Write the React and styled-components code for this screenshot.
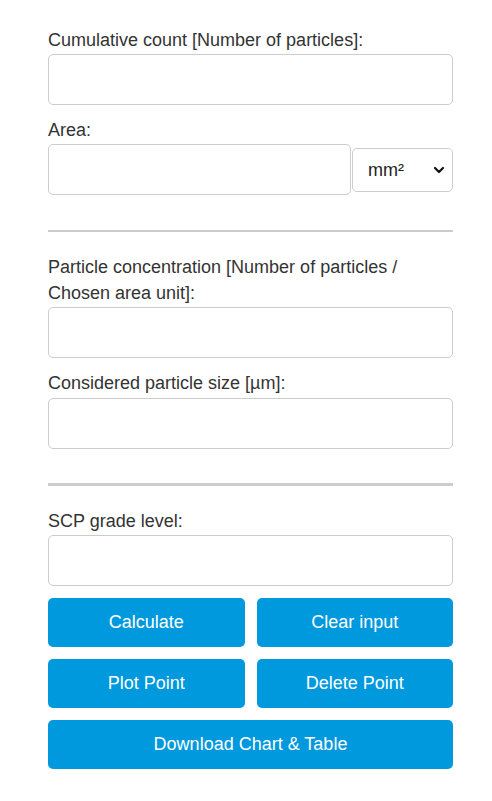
import React from 'react'
import styled, { createGlobalStyle } from 'styled-components'

const Global = createGlobalStyle`
  html, body {
    margin: 0;
    padding: 0;
    background: #fff;
  }
  body {
    font-family: "Liberation Sans", Arial, sans-serif;
    color: #333;
  }
`

const Form = styled.div`
  width: 405px;
  padding: 27px 0 32px 48px;
  display: flex;
  flex-direction: column;
`

const Label = styled.label`
  display: block;
  font-size: 18px;
  line-height: 26px;
  color: #333;
  margin-bottom: ${p => p.$gap || 1}px;
`

const Input = styled.input`
  box-sizing: border-box;
  display: block;
  width: ${p => p.$width || '100%'};
  height: 51px;
  border: 1px solid #ccc;
  border-radius: 5px;
  padding: 0 10px;
  font: inherit;
  font-size: 18px;
  margin: 0 0 12px 0;
  outline: none;
`

const Row = styled.div`
  display: flex;
  align-items: center;
  gap: 1px;
  margin-bottom: 12px;

  ${Input} {
    margin: 0;
  }
`

const SelectWrap = styled.div`
  position: relative;
  flex: 1;
  height: 44px;
`

const Select = styled.select`
  box-sizing: border-box;
  appearance: none;
  width: 100%;
  height: 44px;
  border: 1px solid #ccc;
  border-radius: 5px;
  background: #fff;
  padding: 0 0 0 15px;
  font-family: "Liberation Sans", Arial, sans-serif;
  font-size: 18px;
  color: #222;
  outline: none;
`

const Chevron = styled.svg`
  position: absolute;
  right: 8px;
  top: 17px;
  pointer-events: none;
`

const Divider = styled.hr`
  border: none;
  height: ${p => p.$thick}px;
  background: #ccc;
  margin: ${p => p.$top}px 0 22px 0;
`

const ButtonGrid = styled.div`
  display: grid;
  grid-template-columns: 1fr 1fr;
  column-gap: 12px;
  row-gap: 12px;
`

const Button = styled.button`
  box-sizing: border-box;
  height: 49px;
  border: none;
  border-radius: 5px;
  background: #0099dd;
  color: #fff;
  font-family: "Liberation Sans", Arial, sans-serif;
  font-size: 18px;
  cursor: pointer;
  grid-column: ${p => (p.$wide ? '1 / span 2' : 'auto')};
`

export default function App() {
  return (
    <>
      <Global />
      <Form>
        <Label>Cumulative count [Number of particles]:</Label>
        <Input type="text" />

        <Label>Area:</Label>
        <Row>
          <Input type="text" $width="303px" />
          <SelectWrap>
            <Select defaultValue="mm2">
              <option value="mm2">mm²</option>
              <option value="cm2">cm²</option>
              <option value="m2">m²</option>
            </Select>
            <Chevron width="12" height="10" viewBox="0 0 12 10">
              <path d="M2 3 L6 7 L10 3" stroke="#111" strokeWidth="2.2" fill="none" strokeLinecap="round" strokeLinejoin="round" />
            </Chevron>
          </SelectWrap>
        </Row>

        <Divider $thick={2} $top={23} />

        <Label>Particle concentration [Number of particles /<br />Chosen area unit]:</Label>
        <Input type="text" />

        <Label $gap={2}>Considered particle size [µm]:</Label>
        <Input type="text" />

        <Divider $thick={3} $top={22} />

        <Label>SCP grade level:</Label>
        <Input type="text" />

        <ButtonGrid>
          <Button>Calculate</Button>
          <Button>Clear input</Button>
          <Button>Plot Point</Button>
          <Button>Delete Point</Button>
          <Button $wide>Download Chart &amp; Table</Button>
        </ButtonGrid>
      </Form>
    </>
  )
}
